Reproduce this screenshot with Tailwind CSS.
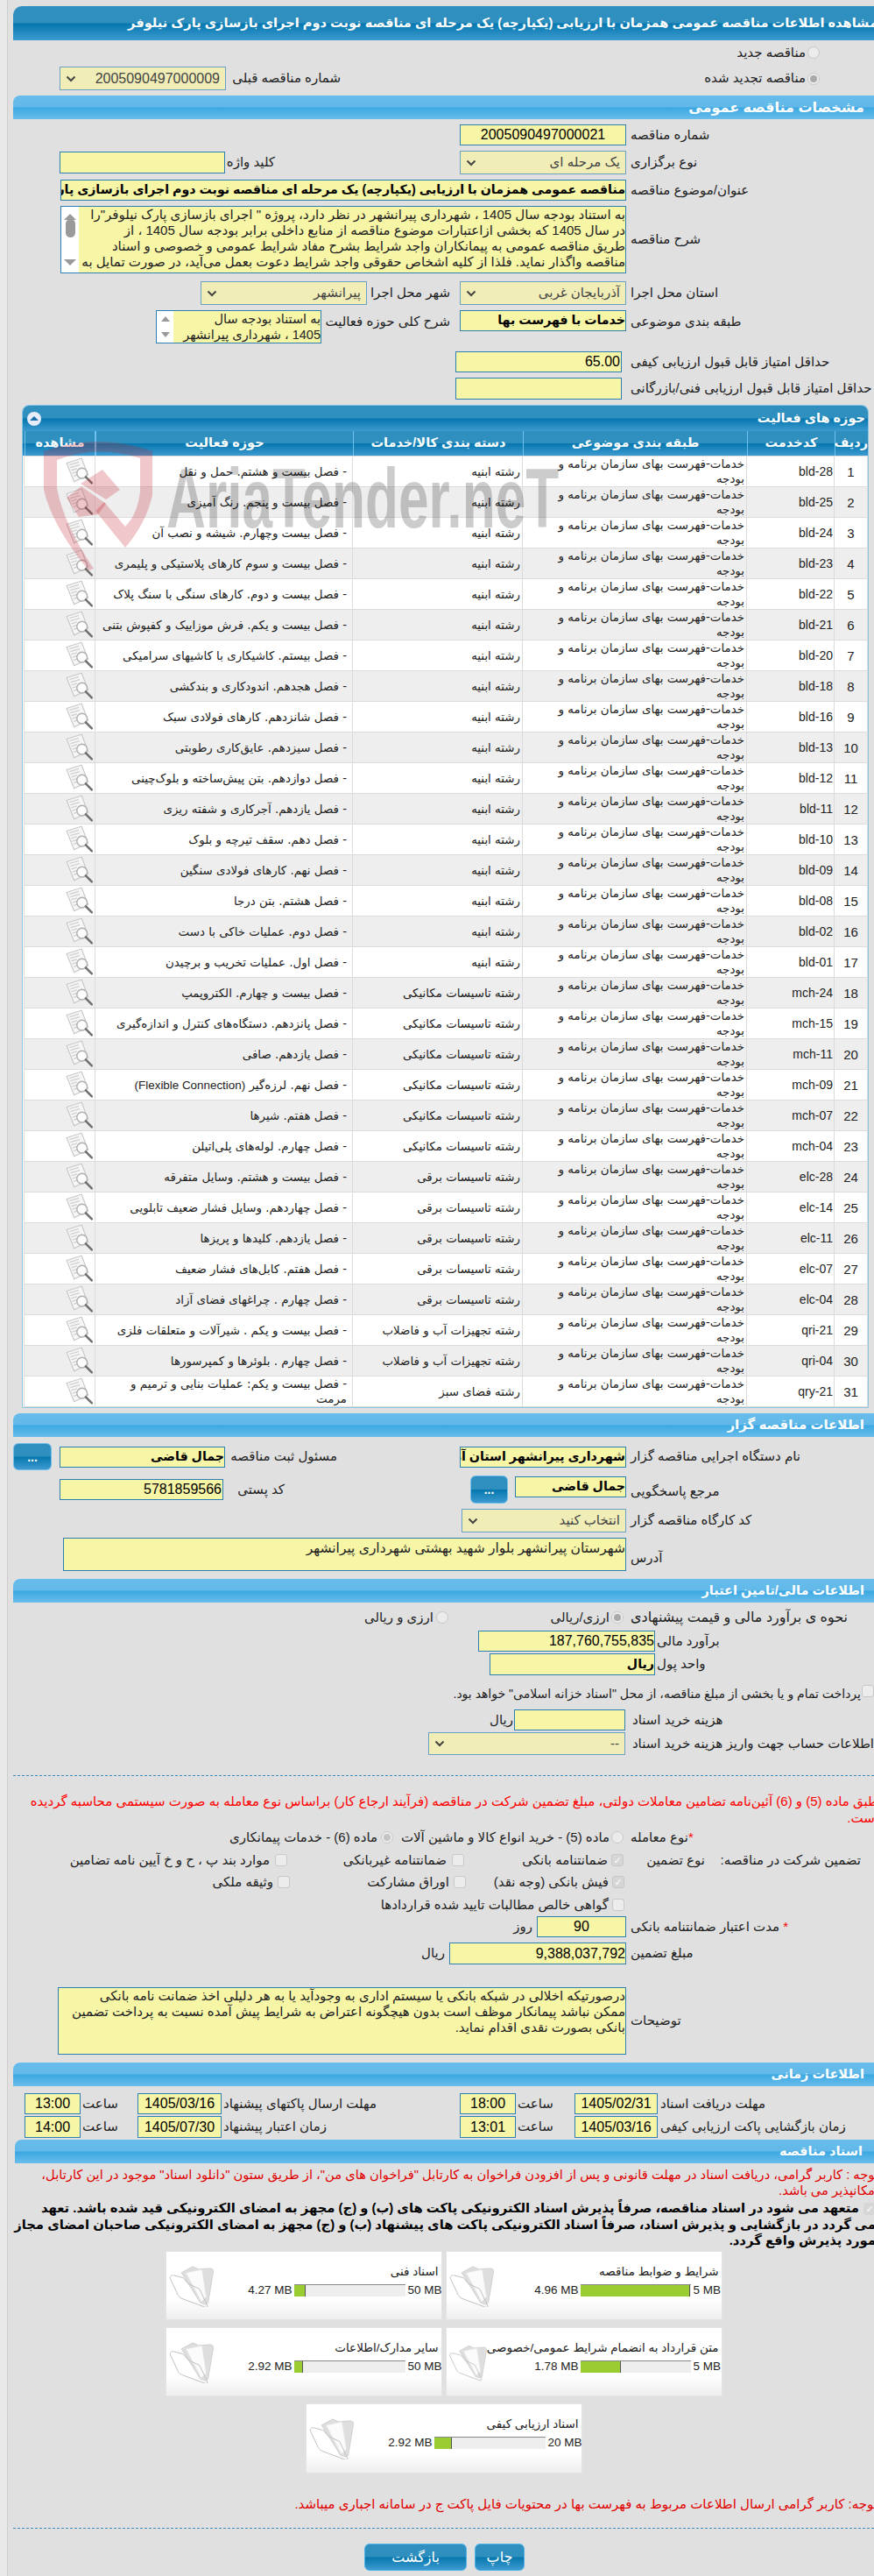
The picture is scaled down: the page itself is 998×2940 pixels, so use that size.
<!DOCTYPE html>
<html lang="fa" dir="rtl">
<head>
<meta charset="utf-8">
<title>مشاهده اطلاعات مناقصه</title>
<script src="https://cdn.jsdelivr.net/npm/@tailwindcss/browser@4"></script>
</head>
<body class="relative w-[998px] h-[2940px] overflow-hidden bg-[#e9e9e9] [font-family:'Liberation_Sans','DejaVu_Sans',sans-serif] text-[15px] text-[#222]">
<svg class="hidden" xmlns="http://www.w3.org/2000/svg">
  <symbol id="chev" viewBox="0 0 12 8"><path d="M1.5 1.5 6 6l4.5-4.5" fill="none" stroke="#444" stroke-width="2"/></symbol>
  <symbol id="doc" viewBox="0 0 30 30">
    <path d="M1 6 17 1l7 18-15 7z" fill="#f6f6f6" stroke="#c4c4c4"/>
    <path d="M4 8l10-3M5 11l10-3M6 14l6-2M7 17l5-1.500M8.500 20l5-1.500" stroke="#d0d0d0" stroke-width="1.200"/>
    <circle cx="17.500" cy="17" r="5.500" fill="#fff" fill-opacity=".75" stroke="#b0b0b0" stroke-width="1.300"/>
    <path d="m21.500 21 6.500 6.500" stroke="#6e6e6e" stroke-width="2.300" stroke-linecap="round"/>
  </symbol>
  <symbol id="folder" viewBox="0 0 52 48">
    <defs><linearGradient id="fg" x1="0" y1="0" x2="1" y2="1"><stop offset="0" stop-color="#e6e6e6"/><stop offset="1" stop-color="#b4b4b4"/></linearGradient></defs>
    <path d="M14 8 27 1l7 3 13-1c3 0 4 1 4 4l-6 36-3 2-6-2z" fill="#dedede" stroke="#cfcfcf"/>
    <path d="M19 8l19-4 5 32-6 6z" fill="#fbfbfb" stroke="#e2e2e2"/>
    <path d="M1 15c-1-3 1-4 4-4l11 3 6 7 13 6 9 19c1 2-1 3-3 2L14 38c-2-1-3-2-4-4z" fill="url(#fg)" stroke="#c0c0c0"/>
  </symbol>
</svg>

<main class="ml-[8px] h-[2940px] border-l border-[#cdcdcd] bg-[#e0e0e0] pl-[6px] pt-[7px]">

  <header class="flex h-[39px] items-center overflow-hidden rounded-tl-[10px] bg-[linear-gradient(#2f90c0_0%,#2f8fbf_49%,#0577ae_51%,#3d9ad0_100%)] -mr-[4px] whitespace-nowrap text-[14.6px] font-bold text-white">مشاهده اطلاعات مناقصه عمومی همزمان با ارزیابی (یکپارچه) یک مرحله ای مناقصه نوبت دوم اجرای بازسازی پارک نیلوفر</header>

  <div class="mt-[4px] flex h-[20px] items-center">
    <span class="mr-[62px] size-[14px] rounded-full border border-[#c8c8c8] bg-[#ececec]"></span>
    <span class="mr-[2px]">مناقصه جدید</span>
  </div>
  <div class="mt-[6px] flex h-[27px] items-center">
    <span class="mr-[62px] grid size-[14px] place-items-center rounded-full border border-[#c8c8c8] bg-[#ececec]"><span class="size-[8px] rounded-full bg-[#a9a9a9]"></span></span>
    <span class="mr-[2px]">مناقصه تجدید شده</span>
    <div class="ml-[53px] mr-auto flex items-center">
      <span class="w-[125px] whitespace-nowrap">شماره مناقصه قبلی</span>
      <div class="mr-[6px] flex h-[27px] w-[190px] items-center justify-between border border-[#6aa0c8] bg-[#f0eeb6] px-[6px] text-[16px] text-[#444]"><span>2005090497000009</span><svg class="h-[8px] w-[12px]"><use href="#chev"/></svg></div>
    </div>
  </div>

  <h2 class="mt-[6px] flex h-[27px] items-center rounded-tl-[8px] bg-[linear-gradient(#66bcea_0%,#62b9e9_49%,#3ba7e2_51%,#6abdeb_100%)] pr-[11px] text-[16px] font-bold text-white">مشخصات مناقصه عمومی</h2>

  <div class="mt-[6px] flex h-[24px] items-center">
    <label class="w-[278px]  text-left">شماره مناقصه</label>
    <div class="mr-[5px] flex h-[24px] w-[190px] items-center justify-center border border-[#2c7fb2] bg-[#f7f5a6] text-[16px] text-black">2005090497000021</div>
  </div>
  <div class="mt-[6px] flex h-[27px] items-center">
    <label class="w-[278px] text-left">نوع برگزاری</label>
    <div class="mr-[5px] flex h-[27px] w-[190px] items-center justify-between border border-[#6aa0c8] bg-[#f0eeb6] px-[6px] text-[#444]"><span>یک مرحله ای</span><svg class="h-[8px] w-[12px]"><use href="#chev"/></svg></div>
    <div class="ml-[53px] mr-auto flex items-center">
      <span class="w-[52px] whitespace-nowrap">کلید واژه</span>
      <div class="mr-[5px] h-[25px] w-[189px] border border-[#2c7fb2] bg-[#f7f5a6]"></div>
    </div>
  </div>
  <div class="mt-[6px] flex h-[24px] items-center">
    <label class="w-[278px] text-left">عنوان/موضوع مناقصه</label>
    <div class="mr-[5px] flex h-[24px] w-[646px] items-center overflow-hidden whitespace-nowrap border border-[#2c7fb2] bg-[#f7f5a6] text-[14.2px] font-bold text-black">مناقصه عمومی همزمان با ارزیابی (یکپارچه) یک مرحله ای مناقصه نوبت دوم اجرای بازسازی پارک نیلوفر</div>
  </div>
  <div class="mt-[6px] flex h-[77px] items-center">
    <label class="w-[278px] text-left">شرح مناقصه</label>
    <div class="mr-[5px] flex h-[77px] w-[646px] overflow-hidden border border-[#2c7fb2] bg-[#f7f5a6]">
      <p class="flex-1 overflow-hidden whitespace-nowrap text-[15px] leading-[18px]">به استناد بودجه  سال 1405 ، شهرداری پیرانشهر در نظر دارد، پروژه " اجرای بازسازی پارک  نیلوفر"را<br>در سال 1405   که بخشی ازاعتبارات موضوع مناقصه از  منابع داخلی برابر بودجه سال 1405  ، از<br>طریق مناقصه عمومی به پیمانکاران واجد شرایط بشرح مفاد شرایط عمومی و خصوصی و اسناد<br>مناقصه واگذار نماید. فلذا از کلیه اشخاص حقوقی واجد شرایط دعوت بعمل می‌آید، در صورت تمایل به</p>
      <div class="flex w-[20px] flex-col items-center justify-between bg-white py-[8px]">
        <span class="border-x-[7px] border-b-[7px] border-x-transparent border-b-[#9a9a9a]"></span>
        <span class="-mt-[14px] h-[21px] w-[11px] rounded-[6px] bg-[#9a9a9a]"></span>
        <span class="mt-[12px] border-x-[7px] border-t-[7px] border-x-transparent border-t-[#9a9a9a]"></span>
      </div>
    </div>
  </div>
  <div class="mt-[9px] flex h-[27px] items-center">
    <label class="w-[278px] text-left">استان محل اجرا</label>
    <div class="mr-[5px] flex h-[27px] w-[190px] items-center justify-between border border-[#6aa0c8] bg-[#f0eeb6] px-[6px] text-[#444]"><span>آذربایجان غربی</span><svg class="h-[8px] w-[12px]"><use href="#chev"/></svg></div>
    <span class="mr-[11px] w-[90px] whitespace-nowrap">شهر محل اجرا</span>
    <div class="mr-[5px] flex h-[27px] w-[190px] items-center justify-between border border-[#6aa0c8] bg-[#f0eeb6] px-[6px] text-[#444]"><span>پیرانشهر</span><svg class="h-[8px] w-[12px]"><use href="#chev"/></svg></div>
  </div>
  <div class="mt-[6px] flex h-[38px] items-start">
    <label class="mt-[2px] w-[278px] text-left">طبقه بندی موضوعی</label>
    <div class="mr-[5px] flex h-[24px] w-[190px] items-center overflow-hidden whitespace-nowrap border border-[#2c7fb2] bg-[#f7f5a6] text-[14.2px] font-bold text-black">خدمات با فهرست بها</div>
    <span class="mr-[11px] mt-[2px] w-[142px] whitespace-nowrap">شرح کلی حوزه فعالیت</span>
    <div class="mr-[5px] flex h-[38px] w-[189px] overflow-hidden border border-[#2c7fb2] bg-[#f7f5a6]">
      <p class="flex-1 overflow-hidden whitespace-nowrap text-[14.5px] leading-[18px]">به استناد بودجه  سال<br>1405 ، شهرداری پیرانشهر</p>
      <div class="flex w-[19px] flex-col items-center justify-between bg-white py-[6px]">
        <span class="border-x-[5px] border-b-[6px] border-x-transparent border-b-[#9a9a9a]"></span>
        <span class="border-x-[5px] border-t-[6px] border-x-transparent border-t-[#9a9a9a]"></span>
      </div>
    </div>
  </div>
  <div class="mt-[9px] flex h-[24px] items-center">
    <label class="w-[278px] text-left">حداقل امتیاز قابل قبول ارزیابی کیفی</label>
    <div class="mr-[10px] flex h-[24px] w-[190px] items-center border border-[#2c7fb2] bg-[#f7f5a6] pr-[1px] text-[16px] text-black">65.00</div>
  </div>
  <div class="mt-[6px] flex h-[25px] items-center">
    <label class="w-[278px] text-left whitespace-nowrap">حداقل امتیاز قابل قبول ارزیابی فنی/بازرگانی</label>
    <div class="mr-[10px] h-[25px] w-[190px] border border-[#2c7fb2] bg-[#f7f5a6]"></div>
  </div>

  <section class="relative ml-[10px] mr-[6px] mt-[6px] overflow-hidden rounded-t-[8px] border border-[#8cc4e2] bg-white">
    <div class="flex h-[29px] items-center justify-between bg-[linear-gradient(#2f90c0_0%,#2f8fbf_49%,#0577ae_51%,#3d9ad0_100%)] pl-[5px] pr-[3px]">
      <span class="text-[14.5px] font-bold text-white">حوزه های فعالیت</span>
      <span class="grid size-[16px] place-items-center rounded-full bg-[#e8ecf8]"><span class="border-x-[5px] border-b-[5px] border-x-transparent border-b-[#1a6fa8]"></span></span>
    </div>
    <div class="flex h-[28px] bg-[linear-gradient(#2f90c0_0%,#2f8fbf_49%,#0577ae_51%,#3d9ad0_100%)] pl-[2px] text-center text-[14.5px] font-bold leading-[27px] text-white [&>span]:border-l [&>span]:border-[#6ec0ee]">
      <span class="w-[38px]">ردیف</span><span class="w-[100px]">کدخدمت</span><span class="w-[256px]">طبقه بندی موضوعی</span><span class="w-[194px]">دسته بندی کالا/خدمات</span><span class="w-[294px]">حوزه فعالیت</span><span class="w-[81px] border-r border-r-[#6ec0ee]">مشاهده</span>
    </div>
    <div class="pl-[2px]">
    <table class="w-[963px] table-fixed border-collapse leading-[17px] text-[#222] [&_td]:h-[35px] [&_td]:border [&_td]:border-[#dcdcdc] [&_td]:p-0 [&_tr:nth-child(even)]:bg-[#eeeeee] [&_td:nth-child(1)]:text-center [&_td:nth-child(1)]:text-[15px] [&_td:nth-child(2)]:pr-[1px] [&_td:nth-child(2)]:text-[14px] [&_td:nth-child(3)]:pr-[2px] [&_td:nth-child(3)]:text-[13.4px] [&_td:nth-child(3)]:whitespace-nowrap [&_td:nth-child(3)]:[font-family:'DejaVu_Sans',sans-serif] [&_td:nth-child(4)]:pr-[2px] [&_td:nth-child(4)]:text-[13.4px] [&_td:nth-child(4)]:[font-family:'DejaVu_Sans',sans-serif] [&_td:nth-child(5)]:pr-[6px] [&_td:nth-child(5)]:text-[13.4px] [&_td:nth-child(5)]:whitespace-nowrap [&_td:nth-child(5)]:[font-family:'DejaVu_Sans',sans-serif] [&_svg]:mr-[1px] [&_svg]:block [&_svg]:h-[32px] [&_svg]:w-[32px]">
      <colgroup><col class="w-[38px]"><col class="w-[100px]"><col class="w-[256px]"><col class="w-[194px]"><col class="w-[294px]"><col class="w-[81px]"></colgroup>
      <tbody>
        <tr><td>1</td><td>bld-28</td><td>خدمات-فهرست بهای سازمان برنامه و<br>بودجه</td><td>رشته ابنیه</td><td>- فصل بیست و هشتم. حمل و نقل</td><td><svg><use href="#doc"/></svg></td></tr>
        <tr><td>2</td><td>bld-25</td><td>خدمات-فهرست بهای سازمان برنامه و<br>بودجه</td><td>رشته ابنیه</td><td>- فصل بیست و پنجم. رنگ آمیزی</td><td><svg><use href="#doc"/></svg></td></tr>
        <tr><td>3</td><td>bld-24</td><td>خدمات-فهرست بهای سازمان برنامه و<br>بودجه</td><td>رشته ابنیه</td><td>- فصل بیست وچهارم. شیشه و نصب آن</td><td><svg><use href="#doc"/></svg></td></tr>
        <tr><td>4</td><td>bld-23</td><td>خدمات-فهرست بهای سازمان برنامه و<br>بودجه</td><td>رشته ابنیه</td><td>- فصل بیست و سوم کارهای پلاستیکی و پلیمری</td><td><svg><use href="#doc"/></svg></td></tr>
        <tr><td>5</td><td>bld-22</td><td>خدمات-فهرست بهای سازمان برنامه و<br>بودجه</td><td>رشته ابنیه</td><td>- فصل بیست و دوم. کارهای سنگی با سنگ پلاک</td><td><svg><use href="#doc"/></svg></td></tr>
        <tr><td>6</td><td>bld-21</td><td>خدمات-فهرست بهای سازمان برنامه و<br>بودجه</td><td>رشته ابنیه</td><td>- فصل بیست و یکم. فرش موزاییک و کفپوش بتنی</td><td><svg><use href="#doc"/></svg></td></tr>
        <tr><td>7</td><td>bld-20</td><td>خدمات-فهرست بهای سازمان برنامه و<br>بودجه</td><td>رشته ابنیه</td><td>- فصل بیستم. کاشیکاری با کاشیهای سرامیکی</td><td><svg><use href="#doc"/></svg></td></tr>
        <tr><td>8</td><td>bld-18</td><td>خدمات-فهرست بهای سازمان برنامه و<br>بودجه</td><td>رشته ابنیه</td><td>- فصل هجدهم. اندودکاری و بندکشی</td><td><svg><use href="#doc"/></svg></td></tr>
        <tr><td>9</td><td>bld-16</td><td>خدمات-فهرست بهای سازمان برنامه و<br>بودجه</td><td>رشته ابنیه</td><td>- فصل شانزدهم. کارهای فولادی سبک</td><td><svg><use href="#doc"/></svg></td></tr>
        <tr><td>10</td><td>bld-13</td><td>خدمات-فهرست بهای سازمان برنامه و<br>بودجه</td><td>رشته ابنیه</td><td>- فصل سیزدهم. عایق‌کاری رطوبتی</td><td><svg><use href="#doc"/></svg></td></tr>
        <tr><td>11</td><td>bld-12</td><td>خدمات-فهرست بهای سازمان برنامه و<br>بودجه</td><td>رشته ابنیه</td><td>- فصل دوازدهم. بتن پیش‌ساخته و بلوک‌چینی</td><td><svg><use href="#doc"/></svg></td></tr>
        <tr><td>12</td><td>bld-11</td><td>خدمات-فهرست بهای سازمان برنامه و<br>بودجه</td><td>رشته ابنیه</td><td>- فصل یازدهم. آجرکاری و شفته ریزی</td><td><svg><use href="#doc"/></svg></td></tr>
        <tr><td>13</td><td>bld-10</td><td>خدمات-فهرست بهای سازمان برنامه و<br>بودجه</td><td>رشته ابنیه</td><td>- فصل دهم. سقف تیرچه و بلوک</td><td><svg><use href="#doc"/></svg></td></tr>
        <tr><td>14</td><td>bld-09</td><td>خدمات-فهرست بهای سازمان برنامه و<br>بودجه</td><td>رشته ابنیه</td><td>- فصل نهم. کارهای فولادی سنگین</td><td><svg><use href="#doc"/></svg></td></tr>
        <tr><td>15</td><td>bld-08</td><td>خدمات-فهرست بهای سازمان برنامه و<br>بودجه</td><td>رشته ابنیه</td><td>- فصل هشتم. بتن درجا</td><td><svg><use href="#doc"/></svg></td></tr>
        <tr><td>16</td><td>bld-02</td><td>خدمات-فهرست بهای سازمان برنامه و<br>بودجه</td><td>رشته ابنیه</td><td>- فصل دوم. عملیات خاکی با دست</td><td><svg><use href="#doc"/></svg></td></tr>
        <tr><td>17</td><td>bld-01</td><td>خدمات-فهرست بهای سازمان برنامه و<br>بودجه</td><td>رشته ابنیه</td><td>- فصل اول. عملیات تخریب و برچیدن</td><td><svg><use href="#doc"/></svg></td></tr>
        <tr><td>18</td><td>mch-24</td><td>خدمات-فهرست بهای سازمان برنامه و<br>بودجه</td><td>رشته تاسیسات مکانیکی</td><td>- فصل بیست و چهارم. الکتروپمپ</td><td><svg><use href="#doc"/></svg></td></tr>
        <tr><td>19</td><td>mch-15</td><td>خدمات-فهرست بهای سازمان برنامه و<br>بودجه</td><td>رشته تاسیسات مکانیکی</td><td>- فصل پانزدهم. دستگاه‌های کنترل و اندازه‌گیری</td><td><svg><use href="#doc"/></svg></td></tr>
        <tr><td>20</td><td>mch-11</td><td>خدمات-فهرست بهای سازمان برنامه و<br>بودجه</td><td>رشته تاسیسات مکانیکی</td><td>- فصل یازدهم. صافی</td><td><svg><use href="#doc"/></svg></td></tr>
        <tr><td>21</td><td>mch-09</td><td>خدمات-فهرست بهای سازمان برنامه و<br>بودجه</td><td>رشته تاسیسات مکانیکی</td><td>- فصل نهم. لرزه‌گیر <span class="[font-family:'Liberation_Sans',sans-serif] leading-none">(Flexible Connection)</span></td><td><svg><use href="#doc"/></svg></td></tr>
        <tr><td>22</td><td>mch-07</td><td>خدمات-فهرست بهای سازمان برنامه و<br>بودجه</td><td>رشته تاسیسات مکانیکی</td><td>- فصل هفتم. شیرها</td><td><svg><use href="#doc"/></svg></td></tr>
        <tr><td>23</td><td>mch-04</td><td>خدمات-فهرست بهای سازمان برنامه و<br>بودجه</td><td>رشته تاسیسات مکانیکی</td><td>- فصل چهارم. لوله‌های پلی‌اتیلن</td><td><svg><use href="#doc"/></svg></td></tr>
        <tr><td>24</td><td>elc-28</td><td>خدمات-فهرست بهای سازمان برنامه و<br>بودجه</td><td>رشته تاسیسات برقی</td><td>- فصل بیست و هشتم. وسایل متفرقه</td><td><svg><use href="#doc"/></svg></td></tr>
        <tr><td>25</td><td>elc-14</td><td>خدمات-فهرست بهای سازمان برنامه و<br>بودجه</td><td>رشته تاسیسات برقی</td><td>- فصل چهاردهم. وسایل فشار ضعیف تابلویی</td><td><svg><use href="#doc"/></svg></td></tr>
        <tr><td>26</td><td>elc-11</td><td>خدمات-فهرست بهای سازمان برنامه و<br>بودجه</td><td>رشته تاسیسات برقی</td><td>- فصل یازدهم. کلیدها و پریزها</td><td><svg><use href="#doc"/></svg></td></tr>
        <tr><td>27</td><td>elc-07</td><td>خدمات-فهرست بهای سازمان برنامه و<br>بودجه</td><td>رشته تاسیسات برقی</td><td>- فصل هفتم. کابل‌های فشار ضعیف</td><td><svg><use href="#doc"/></svg></td></tr>
        <tr><td>28</td><td>elc-04</td><td>خدمات-فهرست بهای سازمان برنامه و<br>بودجه</td><td>رشته تاسیسات برقی</td><td>- فصل چهارم . چراغهای فضای آزاد</td><td><svg><use href="#doc"/></svg></td></tr>
        <tr><td>29</td><td>qri-21</td><td>خدمات-فهرست بهای سازمان برنامه و<br>بودجه</td><td>رشته تجهیزات آب و فاضلاب</td><td>- فصل بیست و یکم . شیرآلات و متعلقات فلزی</td><td><svg><use href="#doc"/></svg></td></tr>
        <tr><td>30</td><td>qri-04</td><td>خدمات-فهرست بهای سازمان برنامه و<br>بودجه</td><td>رشته تجهیزات آب و فاضلاب</td><td>- فصل چهارم . بلوئرها و کمپرسورها</td><td><svg><use href="#doc"/></svg></td></tr>
        <tr><td>31</td><td>qry-21</td><td>خدمات-فهرست بهای سازمان برنامه و<br>بودجه</td><td>رشته فضای سبز</td><td>- فصل بیست و یکم: عملیات بنایی و ترمیم و<br>مرمت</td><td><svg><use href="#doc"/></svg></td></tr>
      </tbody>
    </table>
    </div>
    <svg class="pointer-events-none absolute left-[23px] top-[36px] h-[160px] w-[130px]" viewBox="0 0 130 160">
      <g fill="#c21f2a" fill-opacity=".25">
        <path d="M1 16Q62-6 125 16V66Q118 98 94 126L60 84 70 74 94 102Q108 88 111 62V24Q62 8 16 26V58Q24 100 58 150L52 152Q10 100 1 60Z"/>
        <path d="M43 53 68 37 88 60 72 71Z"/>
        <path d="M27 69 44 56 72 76 63 88 41 91Z"/>
      </g>
    </svg>
    <div dir="ltr" class="pointer-events-none absolute left-[164px] top-[58px] origin-top-left scale-x-[.648] whitespace-nowrap [font-family:'Liberation_Sans',sans-serif] text-[96px] font-bold leading-[96px] text-black/20">AriaTender.neT</div>
  </section>

  <h2 class="mt-[6px] flex h-[27px] items-center rounded-tl-[8px] bg-[linear-gradient(#66bcea_0%,#62b9e9_49%,#3ba7e2_51%,#6abdeb_100%)] pr-[11px] text-[15px] font-bold text-white">اطلاعات مناقصه گزار</h2>

  <div class="mt-[7px] flex h-[31px] items-center">
    <label class="w-[278px] text-left">نام دستگاه اجرایی مناقصه گزار</label>
    <div class="mr-[5px] flex h-[24px] w-[190px] items-center overflow-hidden whitespace-nowrap border border-[#2c7fb2] bg-[#f7f5a6] text-[14.2px] font-bold text-black">شهرداری پیرانشهر استان آذربایجان غربی</div>
    <span class="mr-[140px] w-[122px] whitespace-nowrap">مسئول ثبت مناقصه</span>
    <div class="mr-[6px] flex h-[24px] w-[189px] items-center border border-[#2c7fb2] bg-[#f7f5a6] text-[14.2px] font-bold text-black">جمال قاضی</div>
    <button class="mr-[9px] h-[31px] w-[44px] rounded-[6px] border border-[#6fbde8] bg-[linear-gradient(#2f90c0_0%,#2f8fbf_49%,#0577ae_51%,#3d9ad0_100%)] text-[14px] font-bold leading-[20px] text-white">...</button>
  </div>
  <div class="mt-[6px] flex h-[32px] items-center">
    <label class="mt-[4px] w-[278px] text-left">مرجع پاسخگویی</label>
    <div class="mb-[7px] mr-[5px] flex h-[24px] w-[127px] items-center border border-[#2c7fb2] bg-[#f7f5a6] text-[14.2px] font-bold text-black">جمال قاضی</div>
    <button class="mr-[8px] h-[32px] w-[43px] rounded-[6px] border border-[#6fbde8] bg-[linear-gradient(#2f90c0_0%,#2f8fbf_49%,#0577ae_51%,#3d9ad0_100%)] text-[14px] font-bold leading-[20px] text-white">...</button>
    <span class="mr-[212px] w-[60px] whitespace-nowrap">کد پستی</span>
    <div class="mr-[10px] flex h-[24px] w-[187px] items-center border border-[#2c7fb2] bg-[#f7f5a6] pr-[1px] text-[16px] text-black">5781859566</div>
  </div>
  <div class="mt-[6px] flex h-[27px] items-center">
    <label class="w-[278px] text-left">کد کارگاه مناقصه گزار</label>
    <div class="mr-[5px] flex h-[27px] w-[188px] items-center justify-between border border-[#6aa0c8] bg-[#f0eeb6] px-[6px] text-[#444]"><span>انتخاب کنید</span><svg class="h-[8px] w-[12px]"><use href="#chev"/></svg></div>
  </div>
  <div class="mt-[6px] flex h-[38px] items-center">
    <label class="mt-[8px] w-[278px] text-left">آدرس</label>
    <div class="mr-[5px] h-[38px] w-[643px] border border-[#2c7fb2] bg-[#f7f5a6] text-[15.5px] leading-[22px]">شهرستان پیرانشهر بلوار شهید بهشتی شهرداری پیرانشهر</div>
  </div>

  <h2 class="mt-[9px] flex h-[27px] items-center rounded-tl-[8px] bg-[linear-gradient(#66bcea_0%,#62b9e9_49%,#3ba7e2_51%,#6abdeb_100%)] pr-[11px] text-[14.5px] font-bold text-white">اطلاعات مالی/تامین اعتبار</h2>

  <div class="mt-[7px] flex h-[20px] items-center">
    <label class="w-[278px] whitespace-nowrap text-left text-[16px]">نحوه ی برآورد مالی و قیمت پیشنهادی</label>
    <span class="mr-[8px] grid size-[14px] place-items-center rounded-full border border-[#c8c8c8] bg-[#ececec]"><span class="size-[8px] rounded-full bg-[#a9a9a9]"></span></span>
    <span class="mr-[2px] w-[66px] whitespace-nowrap">ارزی/ریالی</span>
    <span class="mr-[118px] size-[14px] rounded-full border border-[#c8c8c8] bg-[#ececec]"></span>
    <span class="mr-[3px]">ارزی و ریالی</span>
  </div>
  <div class="mt-[5px] flex h-[24px] items-center">
    <label class="w-[248px] text-left">برآورد مالی</label>
    <div class="mr-[2px] flex h-[24px] w-[202px] items-center border border-[#2c7fb2] bg-[#f7f5a6] text-[16px] text-black">187,760,755,835</div>
  </div>
  <div class="mt-[2px] flex h-[25px] items-center">
    <label class="w-[248px] text-left">واحد پول</label>
    <div class="mr-[2px] flex h-[25px] w-[189px] items-center border border-[#2c7fb2] bg-[#f7f5a6] text-[14.2px] font-bold text-black">ریال</div>
  </div>
  <div class="mt-[11px] flex h-[20px] items-center">
    <span class="-mt-[6px] size-[14px] shrink-0 rounded-[3px] border border-[#c8c8c8] bg-[#ececec]"></span>
    <span class="mr-[1px] whitespace-nowrap text-[14px]">پرداخت تمام و یا بخشی از مبلغ مناقصه، از محل "اسناد خزانه اسلامی" خواهد بود.</span>
  </div>
  <div class="mt-[8px] flex h-[24px] items-center">
    <label class="w-[276px] text-left">هزینه خرید اسناد</label>
    <div class="mr-[8px] h-[24px] w-[127px] border border-[#2c7fb2] bg-[#f7f5a6]"></div>
    <span class="mr-[1px]">ریال</span>
  </div>
  <div class="mt-[2px] flex h-[26px] items-center">
    <label class="w-[276px] whitespace-nowrap text-left">اطلاعات حساب جهت واریز هزینه خرید اسناد</label>
    <div class="mr-[8px] flex h-[26px] w-[225px] items-center justify-between border border-[#6aa0c8] bg-[#f0eeb6] px-[6px] text-[#444]"><span>--</span><svg class="h-[8px] w-[12px]"><use href="#chev"/></svg></div>
  </div>

  <hr class="mt-[23px] border-0 border-t border-dashed border-t-[#3b8bc0]">

  <p class="-mr-[5px] ml-[9px] mt-[19px] h-[38px] whitespace-nowrap text-[15px] leading-[19px] text-[#ff0000]">طبق ماده (5) و (6) آئین‌نامه تضامین معاملات دولتی، مبلغ تضمین شرکت در مناقصه (فرآیند ارجاع کار) براساس نوع معامله به صورت سیستمی محاسبه گردیده<br>است.</p>

  <div class="mt-[3px] flex h-[20px] items-center">
    <label class="w-[278px] text-left"><span class="text-[#ff0000]">*</span>نوع معامله</label>
    <span class="mr-[8px] size-[14px] rounded-full border border-[#c8c8c8] bg-[#ececec]"></span>
    <span class="mr-[2px] w-[241px] whitespace-nowrap">ماده (5) - خرید انواع کالا و ماشین آلات</span>
    <span class="mr-[6px] grid size-[14px] place-items-center rounded-full border border-[#c8c8c8] bg-[#ececec]"><span class="size-[8px] rounded-full bg-[#c4c4c4]"></span></span>
    <span class="mr-[4px] whitespace-nowrap">ماده (6) - خدمات پیمانکاری</span>
  </div>
  <div class="mt-[6px] flex h-[20px] items-center">
    <span class="mr-[15px] w-[158px] whitespace-nowrap">تضمین شرکت در مناقصه:</span>
    <span class="mr-[20px] w-[66px] whitespace-nowrap">نوع تضمین</span>
    <span class="mr-[27px] grid size-[14px] place-items-center rounded-[3px] border border-[#c8c8c8] bg-[#d6d6d6] text-[11px] leading-none text-white">✓</span>
    <span class="mr-[4px] w-[101px] whitespace-nowrap">ضمانتنامه بانکی</span>
    <span class="mr-[63px] size-[14px] rounded-[3px] border border-[#c8c8c8] bg-[#ececec]"></span>
    <span class="mr-[6px] w-[120px] whitespace-nowrap">ضمانتنامه غیربانکی</span>
    <span class="mr-[62px] size-[14px] rounded-[3px] border border-[#c8c8c8] bg-[#ececec]"></span>
    <span class="mr-[6px] whitespace-nowrap">موارد بند پ ، ح و خ آیین نامه تضامین</span>
  </div>
  <div class="mt-[5px] flex h-[20px] items-center">
    <span class="mr-[285px] grid size-[14px] place-items-center rounded-[3px] border border-[#c8c8c8] bg-[#d6d6d6] text-[11px] leading-none text-white">✓</span>
    <span class="mr-[4px] w-[137px] whitespace-nowrap">فیش بانکی (وجه نقد)</span>
    <span class="mr-[26px] size-[14px] rounded-[3px] border border-[#c8c8c8] bg-[#ececec]"></span>
    <span class="mr-[5px] w-[91px] whitespace-nowrap">اوراق مشارکت</span>
    <span class="mr-[91px] size-[14px] rounded-[3px] border border-[#c8c8c8] bg-[#ececec]"></span>
    <span class="mr-[5px] whitespace-nowrap">وثیقه ملکی</span>
  </div>
  <div class="mt-[6px] flex h-[20px] items-center">
    <span class="mr-[285px] size-[14px] rounded-[3px] border border-[#c8c8c8] bg-[#ececec]"></span>
    <span class="mr-[4px] whitespace-nowrap">گواهی خالص مطالبات تایید شده قراردادها</span>
  </div>
  <div class="mt-[3px] flex h-[24px] items-center">
    <label class="w-[278px] text-left"><span class="text-[#ff0000]">*</span> مدت اعتبار ضمانتنامه بانکی</label>
    <div class="mr-[5px] flex h-[24px] w-[102px] items-center justify-center border border-[#2c7fb2] bg-[#f7f5a6] text-[16px] text-black">90</div>
    <span class="mr-[5px]">روز</span>
  </div>
  <div class="mt-[6px] flex h-[25px] items-center">
    <label class="w-[278px] text-left">مبلغ تضمین</label>
    <div class="mr-[5px] flex h-[25px] w-[202px] items-center border border-[#2c7fb2] bg-[#f7f5a6] text-[16px] text-black">9,388,037,792</div>
    <span class="mr-[5px]">ریال</span>
  </div>
  <div class="mt-[26px] flex h-[77px] items-center">
    <label class="w-[278px] text-left">توضیحات</label>
    <p class="mr-[5px] h-[77px] w-[649px] overflow-hidden whitespace-nowrap border border-[#2c7fb2] bg-[#f7f5a6] text-[15px] leading-[18px]">درصورتیکه اخلالی در شبکه بانکی یا سیستم اداری به وجودآید یا به هر دلیلی اخذ ضمانت نامه بانکی<br>ممکن نباشد پیمانکار موظف است بدون هیچگونه اعتراض به شرایط پیش آمده نسبت به پرداخت تضمین<br>بانکی بصورت نقدی اقدام نماید.</p>
  </div>

  <h2 class="mt-[9px] flex h-[27px] items-center rounded-tl-[8px] bg-[linear-gradient(#66bcea_0%,#62b9e9_49%,#3ba7e2_51%,#6abdeb_100%)] pr-[11px] text-[14.5px] font-bold text-white">اطلاعات زمانی</h2>

  <div class="mt-[8px] flex h-[24px] items-center">
    <label class="w-[244px] text-left">مهلت دریافت اسناد</label>
    <div class="mr-[3px] flex h-[24px] w-[95px] items-center justify-center border border-[#2c7fb2] bg-[#f7f5a6] text-[16px] text-black">1405/02/31</div>
    <span class="w-[65px] text-left">ساعت</span>
    <div class="mr-[2px] flex h-[24px] w-[64px] items-center justify-center border border-[#2c7fb2] bg-[#f7f5a6] text-[16px] text-black">18:00</div>
    <span class="mr-[86px] w-[184px] whitespace-nowrap text-left">مهلت ارسال پاکتهای پیشنهاد</span>
    <div class="mr-[2px] flex h-[24px] w-[96px] items-center justify-center border border-[#2c7fb2] bg-[#f7f5a6] text-[16px] text-black">1405/03/16</div>
    <span class="w-[63px] text-left">ساعت</span>
    <div class="mr-[2px] flex h-[24px] w-[64px] items-center justify-center border border-[#2c7fb2] bg-[#f7f5a6] text-[16px] text-black">13:00</div>
  </div>
  <div class="mt-[2px] flex h-[25px] items-center">
    <label class="w-[244px] whitespace-nowrap text-left">زمان بازگشایی پاکت ارزیابی کیفی</label>
    <div class="mr-[3px] flex h-[25px] w-[95px] items-center justify-center border border-[#2c7fb2] bg-[#f7f5a6] text-[16px] text-black">1405/03/16</div>
    <span class="w-[65px] text-left">ساعت</span>
    <div class="mr-[2px] flex h-[25px] w-[64px] items-center justify-center border border-[#2c7fb2] bg-[#f7f5a6] text-[16px] text-black">13:01</div>
    <span class="mr-[86px] w-[184px] whitespace-nowrap text-left">زمان اعتبار پیشنهاد</span>
    <div class="mr-[2px] flex h-[25px] w-[96px] items-center justify-center border border-[#2c7fb2] bg-[#f7f5a6] text-[16px] text-black">1405/07/30</div>
    <span class="w-[63px] text-left">ساعت</span>
    <div class="mr-[2px] flex h-[25px] w-[64px] items-center justify-center border border-[#2c7fb2] bg-[#f7f5a6] text-[16px] text-black">14:00</div>
  </div>

  <h2 class="ml-[2px] mt-[2px] flex h-[27px] items-center rounded-tl-[8px] bg-[linear-gradient(#66bcea_0%,#62b9e9_49%,#3ba7e2_51%,#6abdeb_100%)] pr-[13px] text-[14.5px] font-bold text-white">اسناد مناقصه</h2>

  <p class="-mr-[5px] ml-[22px] mt-[4px] h-[36px] whitespace-nowrap text-[14.7px] leading-[18px] text-[#e00000]">توجه : کاربر گرامی، دریافت اسناد در مهلت قانونی و پس از افزودن فراخوان به کارتابل "فراخوان های من"، از طریق ستون "دانلود اسناد" موجود در این کارتابل،<br>امکانپذیر می باشد.</p>

  <p class="-mr-[2px] mt-[2px] h-[55px] whitespace-nowrap text-[14.8px] font-bold leading-[18.5px] text-black"><span class="ml-[5px] inline-block size-[14px] rounded-[3px] bg-[#d6d6d6] text-center align-middle text-[11px] leading-[14px] text-white">✓</span>متعهد می شود در اسناد مناقصه، صرفاً پذیرش اسناد الکترونیکی پاکت های (ب) و (ج) مجهز به امضای الکترونیکی قید شده باشد. تعهد<br>می گردد در بازگشایی و پذیرش اسناد، صرفاً اسناد الکترونیکی پاکت های پیشنهاد (ب) و (ج) مجهز به امضای الکترونیکی صاحبان امضای مجاز<br>مورد پذیرش واقع گردد.</p>

  <div class="mx-auto mt-[3px] flex w-[636px] flex-wrap justify-center gap-x-[4px] gap-y-[8px] text-[13.5px] [&_span]:whitespace-nowrap">
    <article class="flex h-[79px] w-[316px] border border-[#e4e4e4] bg-[linear-gradient(#fff_70%,#eeeeee)] pr-[3px]">
      <div class="flex-1">
        <h3 class="mt-[14px] h-[18px] leading-[18px]">شرایط و ضوابط مناقصه</h3>
        <div class="mt-[5px] flex h-[14px] items-center pr-[1px]"><span dir="ltr" class="w-[28px] text-right">5 MB</span><div dir="ltr" class="mr-[3px] h-[14px] w-[126px] border-t border-[#888] bg-[#eeeeee]"><div class="h-[13px] w-[125px] border-r border-[#555] bg-[#9acd32]"></div></div><span dir="ltr" class="mr-[2px]">4.96 MB</span></div>
      </div>
      <svg class="ml-[3px] mt-[16px] h-[47px] w-[52px]"><use href="#folder"/></svg>
    </article>
    <article class="flex h-[79px] w-[316px] border border-[#e4e4e4] bg-[linear-gradient(#fff_70%,#eeeeee)] pr-[3px]">
      <div class="flex-1">
        <h3 class="mt-[14px] h-[18px] leading-[18px]">اسناد فنی</h3>
        <div class="mt-[5px] flex h-[14px] items-center pr-[1px]"><span dir="ltr" class="w-[34px] text-right">50 MB</span><div dir="ltr" class="mr-[3px] h-[14px] w-[127px] border-t border-[#888] bg-[#eeeeee]"><div class="h-[13px] w-[13px] border-r border-[#555] bg-[#9acd32]"></div></div><span dir="ltr" class="mr-[2px]">4.27 MB</span></div>
      </div>
      <svg class="ml-[3px] mt-[16px] h-[47px] w-[52px]"><use href="#folder"/></svg>
    </article>
    <article class="flex h-[79px] w-[316px] border border-[#e4e4e4] bg-[linear-gradient(#fff_70%,#eeeeee)] pr-[3px]">
      <div class="flex-1">
        <h3 class="mt-[14px] h-[18px] whitespace-nowrap leading-[18px]">متن قرارداد به انضمام شرایط عمومی/خصوصی</h3>
        <div class="mt-[5px] flex h-[14px] items-center pr-[1px]"><span dir="ltr" class="w-[28px] text-right">5 MB</span><div dir="ltr" class="mr-[3px] h-[14px] w-[126px] border-t border-[#888] bg-[#eeeeee]"><div class="h-[13px] w-[46px] border-r border-[#555] bg-[#9acd32]"></div></div><span dir="ltr" class="mr-[2px]">1.78 MB</span></div>
      </div>
      <svg class="ml-[3px] mt-[16px] h-[47px] w-[52px]"><use href="#folder"/></svg>
    </article>
    <article class="flex h-[79px] w-[316px] border border-[#e4e4e4] bg-[linear-gradient(#fff_70%,#eeeeee)] pr-[3px]">
      <div class="flex-1">
        <h3 class="mt-[14px] h-[18px] leading-[18px]">سایر مدارک/اطلاعات</h3>
        <div class="mt-[5px] flex h-[14px] items-center pr-[1px]"><span dir="ltr" class="w-[34px] text-right">50 MB</span><div dir="ltr" class="mr-[3px] h-[14px] w-[127px] border-t border-[#888] bg-[#eeeeee]"><div class="h-[13px] w-[10px] border-r border-[#555] bg-[#9acd32]"></div></div><span dir="ltr" class="mr-[2px]">2.92 MB</span></div>
      </div>
      <svg class="ml-[3px] mt-[16px] h-[47px] w-[52px]"><use href="#folder"/></svg>
    </article>
    <article class="flex h-[80px] w-[316px] border border-[#e4e4e4] bg-[linear-gradient(#fff_70%,#eeeeee)] pr-[3px]">
      <div class="flex-1">
        <h3 class="mt-[14px] h-[18px] leading-[18px]">اسناد ارزیابی کیفی</h3>
        <div class="mt-[5px] flex h-[14px] items-center pr-[1px]"><span dir="ltr" class="w-[34px] text-right">20 MB</span><div dir="ltr" class="mr-[3px] h-[14px] w-[127px] border-t border-[#888] bg-[#eeeeee]"><div class="h-[13px] w-[20px] border-r border-[#555] bg-[#9acd32]"></div></div><span dir="ltr" class="mr-[2px]">2.92 MB</span></div>
      </div>
      <svg class="ml-[3px] mt-[16px] h-[47px] w-[52px]"><use href="#folder"/></svg>
    </article>
  </div>

  <p class="-mr-[4px] mt-[25px] h-[19px] whitespace-nowrap text-[15px] leading-[19px] text-[#e00000]">توجه: کاربر گرامی ارسال اطلاعات مربوط به فهرست بها در محتویات فایل پاکت ج در سامانه اجباری میباشد.</p>

  <hr class="mt-[18px] border-0 border-t border-dashed border-t-[#3b8bc0]">

  <div class="mt-[17px] flex h-[31px] gap-[9px] pr-[399px] text-[16px] text-white">
    <button class="w-[57px] rounded-[6px] border border-[#4fb2e6] bg-[linear-gradient(#2f90c0_0%,#2f8fbf_49%,#0577ae_51%,#3d9ad0_100%)]">چاپ</button>
    <button class="w-[117px] rounded-[6px] border border-[#4fb2e6] bg-[linear-gradient(#2f90c0_0%,#2f8fbf_49%,#0577ae_51%,#3d9ad0_100%)]">بازگشت</button>
  </div>
</main>
</body>
</html>
